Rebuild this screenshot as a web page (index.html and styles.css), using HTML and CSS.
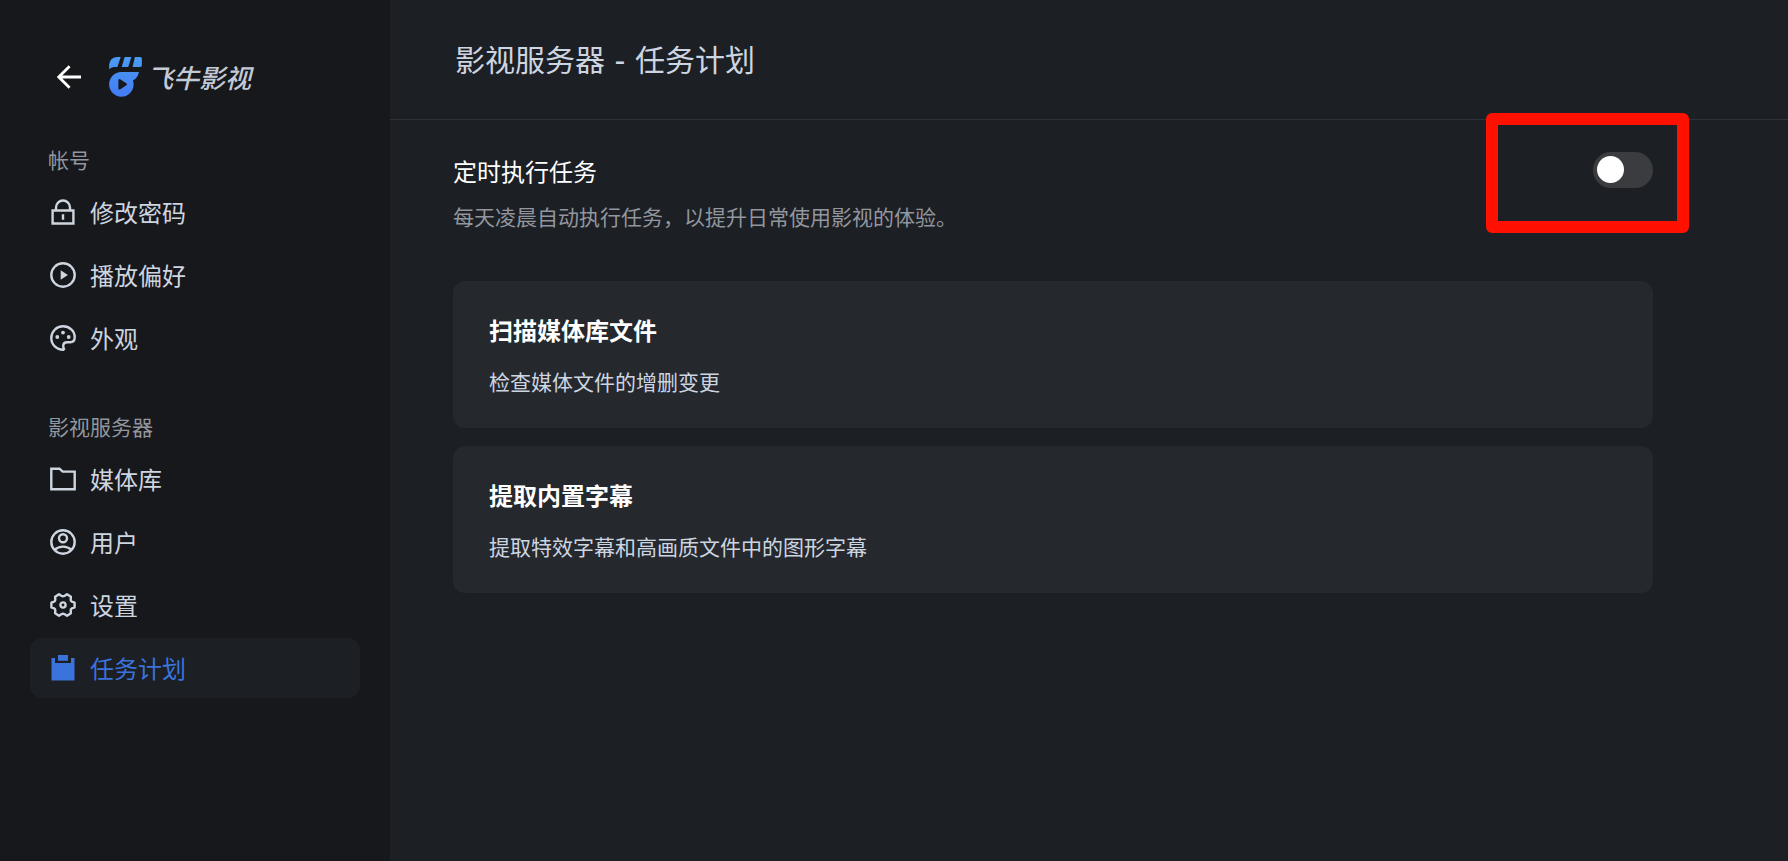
FILE: index.html
```html
<!DOCTYPE html>
<html lang="zh-CN">
<head>
<meta charset="utf-8">
<meta name="viewport" content="width=device-width, initial-scale=1">
<title>飞牛影视 - 任务计划</title>
<link rel="stylesheet" href="styles.css">
</head>
<body>
<div class="app">
  <aside class="sidebar">
    <div class="brand">
      <button class="back" type="button" aria-label="返回">
        <svg viewBox="0 0 24 24" width="24" height="24" fill="none" stroke="currentColor" stroke-width="2.8"><path d="M24 12H1.8M12.6 1.2 1.8 12l10.8 10.8"/></svg>
      </button>
      <a class="logo" href="#">
        <svg viewBox="237 51 99 121" width="33" height="40" aria-hidden="true">
          <defs><linearGradient id="logo-fill" gradientUnits="userSpaceOnUse" x1="0" y1="51" x2="0" y2="172"><stop offset="0" stop-color="#4b9cf5"/><stop offset="1" stop-color="#427bf3"/></linearGradient></defs>
          <g fill="url(#logo-fill)">
            <path d="M237 88V74Q240 51 262 51H272L262 81H251Q243 82 237 88Z"/>
            <path d="M284 51H304L296 78Q295 81 292 81H275Z"/>
            <path d="M315 51H331Q336 51 336 56V76Q336 81 331 81H308Z"/>
            <path fill-rule="evenodd" d="M274 96H327Q324 114 309 122Q311 128 311 134A37 37.500 0 1 1 274 96ZM265 121V147Q266 151 270 149L290 136Q293 133 290 131L270 118Q266 117 265 121Z"/>
          </g>
        </svg>
        <span class="logo-name">飞牛影视</span>
      </a>
    </div>

    <nav class="menu">
      <section class="group">
        <h2 class="group-title">帐号</h2>
        <a class="item" href="#password">
          <svg class="icon" viewBox="0 0 30 30"><path d="M4.600 13.500h20.800v13H4.600zM8 13.500V10.500a7 7 0 0 1 14 0v3M15 17.300v5.400"/></svg>
          修改密码</a>
        <a class="item" href="#playback">
          <svg class="icon" viewBox="0 0 30 30"><circle cx="15" cy="15" r="11.700"/><path class="solid" d="M12.700 10.300v9.400l7.200-4.700z"/></svg>
          播放偏好</a>
        <a class="item" href="#appearance">
          <svg class="icon" viewBox="0 0 30 30"><path d="M15 3.300A11.700 11.700 0 0 0 3.300 15c0 6.700 5.200 11.700 12 11.700l.7-.7c-.6-1.200-.8-2-.8-3 0-2.400 1.600-3.800 4-3.800h3c2.800 0 4.500-2 4.500-5C26.700 7.800 21.500 3.300 15 3.300z"/><g class="solid"><circle cx="9.300" cy="14" r="1.900"/><circle cx="15" cy="9.600" r="1.900"/><circle cx="20.700" cy="14" r="1.900"/></g></svg>
          外观</a>
      </section>

      <section class="group">
        <h2 class="group-title">影视服务器</h2>
        <a class="item" href="#library">
          <svg class="icon" viewBox="0 0 30 30"><path d="M3.300 4.700h8.200l3.200 2.900h12v17.700H3.300z"/></svg>
          媒体库</a>
        <a class="item" href="#users">
          <svg class="icon" viewBox="0 0 30 30"><circle cx="15" cy="15" r="11.700"/><circle cx="15" cy="11.200" r="4"/><path d="M6.500 22.800C9 20.500 11.500 19.600 15 19.600s6 .9 8.500 3.200"/></svg>
          用户</a>
        <a class="item" href="#settings">
          <svg class="icon" viewBox="0 0 30 30"><path stroke-linejoin="round" d="M26.600 12.600V17.400L23.900 18.400Q22.600 19 22.700 20.400L22.900 23.200L19 25.800L16.700 24.200Q15 23.200 13.300 24.200L11 25.800L7.100 23.200L7.300 20.400Q7.400 19 6.100 18.400L3.400 17.400V12.600L6.100 11.600Q7.400 11 7.300 9.600L7.100 6.800L11 4.200L13.300 5.800Q15 6.800 16.700 5.800L19 4.200L22.900 6.800L22.700 9.600Q22.600 11 23.900 11.600Z"/><circle cx="15" cy="15" r="2.600"/></svg>
          设置</a>
        <a class="item active" href="#tasks" aria-current="page">
          <svg class="icon" viewBox="0 0 30 30"><path class="solid" d="M3.500 5H7v5h16V5h3.500v22.500h-23zM10 2h10v5.700H10z"/></svg>
          任务计划</a>
      </section>
    </nav>
  </aside>

  <main class="main">
    <header class="header"><h1 class="title">影视服务器 - 任务计划</h1></header>
    <div class="content">
      <div class="setting">
        <div class="setting-text">
          <label class="setting-name" for="schedule">定时执行任务</label>
          <p class="setting-note" id="schedule-note">每天凌晨自动执行任务，以提升日常使用影视的体验。</p>
        </div>
        <div class="switch-wrap">
          <input class="switch" id="schedule" type="checkbox" role="switch" aria-describedby="schedule-note">
          <span class="highlight" aria-hidden="true"></span>
        </div>
      </div>
      <div class="cards">
        <article class="card">
          <h3 class="card-title">扫描媒体库文件</h3>
          <p class="card-text">检查媒体文件的增删变更</p>
        </article>
        <article class="card">
          <h3 class="card-title">提取内置字幕</h3>
          <p class="card-text">提取特效字幕和高画质文件中的图形字幕</p>
        </article>
      </div>
    </div>
  </main>
</div>
</body>
</html>
```
FILE: styles.css
```css
* {
  box-sizing: border-box;
}

body {
  margin: 0;
  background: #1c1f24;
  color: #cdd5e0;
  font-family: "Noto Sans CJK SC", sans-serif;
  font-size: 21px;
  line-height: 30px;
}

h1, h2, h3, p {
  margin: 0;
  font-weight: 400;
}

a {
  color: inherit;
  text-decoration: none;
}

.app {
  display: flex;
  min-height: 100vh;
}

/* Sidebar */
.sidebar {
  flex: 0 0 390px;
  padding: 54px 30px;
  background: #17181b;
}

.brand {
  display: flex;
  align-items: center;
  gap: 28px;
  height: 46px;
  margin-bottom: 44px;
  padding-left: 27px;
}

.back {
  display: flex;
  padding: 0;
  border: 0;
  background: none;
  color: #fff;
  cursor: pointer;
}

.logo {
  display: flex;
  align-items: center;
  gap: 5px;
}

.logo-name {
  font-size: 26px;
  font-style: italic;
  font-weight: 500;
  color: #c3cad6;
}

.menu {
  display: flex;
  flex-direction: column;
  gap: 43px;
}

.group {
  display: flex;
  flex-direction: column;
  gap: 3px;
}

.group-title {
  padding: 0 18px 5px;
  font-size: 21px;
  color: #92969e;
}

.item {
  display: flex;
  align-items: center;
  gap: 12px;
  height: 60px;
  padding: 0 18px;
  border-radius: 12px;
  font-size: 24px;
}

.item.active {
  background: #1c1f24;
  color: #3b73dc;
}

.icon {
  width: 30px;
  height: 30px;
  fill: none;
  stroke: currentColor;
  stroke-width: 2.4;
}

.solid {
  fill: currentColor;
  stroke: none;
}

/* Main panel */
.main {
  flex: 1;
  min-width: 0;
}

.header {
  height: 120px;
  padding: 40px 65px;
  border-bottom: 1px solid #2f3237;
}

.title {
  font-family: "DejaVu Sans", "Noto Sans CJK SC", sans-serif;
  font-size: 30px;
  line-height: 42px;
}

.content {
  max-width: 1326px;
  padding: 32px 63px;
}

.setting {
  display: flex;
  justify-content: space-between;
  align-items: flex-start;
  margin-bottom: 50px;
}

.setting-text {
  display: grid;
  gap: 11px;
}

.setting-name {
  font-size: 24px;
  line-height: 38px;
  color: #fff;
}

.setting-note {
  color: #92969e;
}

.switch-wrap {
  position: relative;
  display: flex;
}

.switch {
  appearance: none;
  display: flex;
  align-items: flex-start;
  width: 60px;
  height: 36px;
  margin: 0;
  padding: 4px;
  border-radius: 18px;
  background: #3b3c40;
  cursor: pointer;
}

.switch::before {
  content: "";
  width: 27px;
  height: 27px;
  border-radius: 50%;
  background: #fff;
}

.switch:checked {
  justify-content: flex-end;
  background: #3b73dc;
}

/* Callout frame drawn over the switch */
.highlight {
  position: absolute;
  inset: -39px -36px -45px -107px;
  border: 12px solid #ff1000;
  border-radius: 6px;
  pointer-events: none;
}

.cards {
  display: grid;
  gap: 18px;
}

.card {
  display: grid;
  gap: 18px;
  padding: 31px 36px 32px;
  border-radius: 12px;
  background: #25282c;
}

.card-title {
  font-size: 24px;
  line-height: 36px;
  font-weight: 700;
  color: #fff;
}
```
